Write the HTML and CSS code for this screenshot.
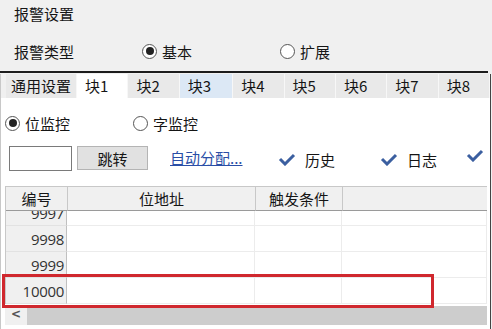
FILE: index.html
```html
<!DOCTYPE html>
<html lang="zh-CN">
<head>
  <meta charset="UTF-8">
  <title>报警设置</title>
  <link rel="stylesheet" href="styles.css">
</head>
<body>
  <div class="window">
    <div class="title">报警设置</div>
    <div class="type-row">
      <span class="type-label">报警类型</span>
      <span class="radio radio-basic"><i class="dot on"></i>基本</span>
      <span class="radio"><i class="dot"></i>扩展</span>
    </div>
    <div class="rule"></div>

    <div class="tabs-area">
      <div class="tabs">
        <span class="tab tab-wide">通用设置</span>
        <span class="tab active">块1</span>
        <span class="tab">块2</span>
        <span class="tab hover">块3</span>
        <span class="tab">块4</span>
        <span class="tab">块5</span>
        <span class="tab">块6</span>
        <span class="tab">块7</span>
        <span class="tab">块8</span>
      </div>

      <div class="panel">
        <div class="mode-row">
          <span class="radio radio-bit"><i class="dot on"></i>位监控</span>
          <span class="radio"><i class="dot"></i>字监控</span>
        </div>

        <div class="tools-row">
          <input class="jump-input" type="text">
          <button class="jump-btn">跳转</button>
          <a class="auto-link" href="#">自动分配...</a>
          <span class="check check-history"><svg width="18" height="13" viewBox="0 0 18 13"><polyline points="2,6 7,11 16,2" fill="none" stroke="#3b5fa0" stroke-width="3"/></svg>历史</span>
          <span class="check check-log"><svg width="18" height="13" viewBox="0 0 18 13"><polyline points="2,6 7,11 16,2" fill="none" stroke="#3b5fa0" stroke-width="3"/></svg>日志</span>
          <span class="check"><svg width="18" height="13" viewBox="0 0 18 13"><polyline points="2,6 7,11 16,2" fill="none" stroke="#3b5fa0" stroke-width="3"/></svg></span>
        </div>

        <div class="grid">
          <div class="grid-head">
            <span class="cell num">编号</span>
            <span class="cell addr">位地址</span>
            <span class="cell cond">触发条件</span>
            <span class="cell rest"></span>
          </div>
          <div class="grid-body">
            <div class="row first">
              <span class="cell num">9997</span><span class="cell addr"></span><span class="cell cond"></span><span class="cell rest"></span>
            </div>
            <div class="row">
              <span class="cell num">9998</span><span class="cell addr"></span><span class="cell cond"></span><span class="cell rest"></span>
            </div>
            <div class="row">
              <span class="cell num">9999</span><span class="cell addr"></span><span class="cell cond"></span><span class="cell rest"></span>
            </div>
            <div class="row">
              <span class="cell num">10000</span><span class="cell addr"></span><span class="cell cond"></span><span class="cell rest"></span>
            </div>
          </div>
          <div class="hscroll">
            <span class="arrow">&lt;</span>
            <span class="thumb"></span>
          </div>
        </div>
      </div>
    </div>

    <!-- highlight box drawn over the last row -->
    <div class="highlight"></div>
  </div>
</body>
</html>
```

FILE: styles.css
```css
/* General Styles */
body {
  margin: 0;
  font-family: "Noto Sans CJK SC", "Noto Sans", sans-serif;
  font-size: 15px;
  color: #151515;
  background: #f0f0f0;
}

.window {
  position: relative;
  width: 492px;
  height: 329px;
  overflow: hidden;
  background: #f0f0f0;
}

.title {
  height: 28px;
  line-height: 28px;
  padding-left: 14px;
}

.type-row {
  box-sizing: border-box;
  height: 43px;
  padding: 3px 0 0 14px;
  display: flex;
  align-items: center;
}

.type-label {
  width: 128px;
}

.radio {
  display: flex;
  align-items: center;
  gap: 5px;
}

.radio-basic {
  width: 138px;
}

.dot {
  box-sizing: border-box;
  width: 15px;
  height: 15px;
  border: 1px solid #555;
  border-radius: 50%;
  background: #fff;
  display: flex;
  align-items: center;
  justify-content: center;
}

.dot.on::after {
  content: "";
  width: 8px;
  height: 8px;
  border-radius: 50%;
  background: #222;
}

.rule {
  height: 2px;
  width: 488px;
  background: #1c1c1c;
}

.tabs-area {
  box-sizing: border-box;
  width: 491px;
  height: 256px;
  margin-top: 1px;
  border-left: 1px solid #c8c8c8;
  border-right: 1px solid #444;
  background: #fff;
}

.tabs {
  display: flex;
  height: 24px;
  padding-left: 5px;
  background: #f0f0f0;
}

.tab {
  box-sizing: border-box;
  width: 52px;
  height: 24px;
  line-height: 24px;
  padding-left: 8px;
  background: #e9e9e9;
  border-right: 1px solid #f7f7f7;
  white-space: nowrap;
}

.tab-wide {
  width: 72px;
  padding-left: 5px;
}

.tab.active {
  background: #fff;
  width: 52px;
}

.tab.hover {
  background: #dce8f5;
  width: 54px;
}

.panel {
  padding-left: 4px;
}

.mode-row {
  box-sizing: border-box;
  height: 46px;
  padding-top: 4px;
  display: flex;
  align-items: center;
}

.radio-bit {
  width: 128px;
}

.tools-row {
  height: 42px;
  display: flex;
  align-items: flex-start;
}

.jump-input {
  box-sizing: border-box;
  width: 63px;
  height: 25px;
  margin: 2px 0 0 4px;
  border: 1px solid #7a7a7a;
  background: #fff;
}

.jump-btn {
  box-sizing: border-box;
  width: 71px;
  height: 24px;
  margin: 2px 0 0 5px;
  border: 1px solid #b4b4b4;
  background: #e1e1e1;
  font-family: inherit;
  font-size: 15px;
  color: #151515;
  padding: 0;
}

.auto-link {
  margin: 3px 0 0 22px;
  color: #2a4ea6;
  text-decoration: underline;
  width: 96px;
  white-space: nowrap;
}

.check {
  display: flex;
  align-items: center;
  gap: 9px;
  margin-top: 5px;
}

.check-history {
  margin-left: 12px;
  width: 102px;
}

.check-log {
  width: 86px;
}

.grid {
  width: 482px;
}

.grid-head,
.row {
  display: flex;
}

.grid-head {
  height: 25px;
  line-height: 24px;
  background: #f0f0f0;
  border-top: 1px solid #c8c8c8;
  border-left: 1px solid #c8c8c8;
  box-sizing: border-box;
}

.grid-head .cell {
  text-align: center;
  border-right: 1px solid #c8c8c8;
  border-bottom: 1px solid #9a9a9a;
}

.cell {
  box-sizing: border-box;
  height: 100%;
}

.num {
  width: 62px;
}

.addr {
  width: 188px;
}

.cond {
  width: 87px;
}

.rest {
  flex: 1;
}

.grid-head .rest {
  border-right: none;
  background: #f0f0f0;
}

.grid-body {
  height: 93px;
  overflow: hidden;
  border-left: 1px solid #c8c8c8;
}

.row {
  height: 26px;
  line-height: 26px;
}

.row.first {
  margin-top: -11px;
}

.row .cell {
  border-right: 1px solid #ececec;
  border-bottom: 1px solid #ececec;
}

.row .num {
  background: #f0f0f0;
  text-align: right;
  padding-right: 2px;
  color: #333;
  font-family: "Open Sans", sans-serif;
  font-size: 15px;
  letter-spacing: -0.3px;
  border-right: 1px solid #c0c0c0;
  border-bottom: 1px solid #e2e2e2;
  width: 61px;
}

.hscroll {
  display: flex;
  height: 19px;
  margin-top: 2px;
}

.arrow {
  width: 22px;
  background: #f0f0f0;
  color: #555;
  font-family: "DejaVu Sans", sans-serif;
  font-weight: bold;
  font-size: 12px;
  line-height: 16px;
  padding-left: 6px;
  box-sizing: border-box;
}

.thumb {
  flex: 1;
  background: #cdcdcd;
}

.highlight {
  position: absolute;
  left: 2px;
  top: 274px;
  width: 432px;
  height: 34px;
  box-sizing: border-box;
  border: 3px solid #d0282e;
}
```
